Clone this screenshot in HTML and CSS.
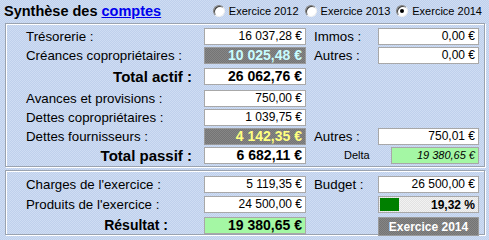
FILE: index.html
```html
<!DOCTYPE html>
<html lang="fr">
<head>
  <meta charset="UTF-8" />
  <title>Synthèse des comptes</title>
  <link rel="stylesheet" href="styles.css">
</head>
<body>
  <div class="header">
    <h1>Synthèse des <a href="#">comptes</a></h1>
    <div class="years">
      <label class="radio"><span class="circle"></span>Exercice 2012</label>
      <label class="radio"><span class="circle"></span>Exercice 2013</label>
      <label class="radio checked"><span class="circle"></span>Exercice 2014</label>
    </div>
  </div>

  <!-- Bilan -->
  <div class="panel bilan">
    <div class="row">
      <span class="label">Trésorerie :</span>
      <span class="val">16 037,28 €</span>
      <span class="label side">Immos :</span>
      <span class="val">0,00 €</span>
    </div>
    <div class="row">
      <span class="label">Créances copropriétaires :</span>
      <span class="val grey cyan">10 025,48 €</span>
      <span class="label side">Autres :</span>
      <span class="val">0,00 €</span>
    </div>
    <div class="row total-actif">
      <span class="label total">Total actif :</span>
      <span class="val bold">26 062,76 €</span>
    </div>
    <div class="row">
      <span class="label">Avances et provisions :</span>
      <span class="val">750,00 €</span>
    </div>
    <div class="row">
      <span class="label">Dettes copropriétaires :</span>
      <span class="val">1 039,75 €</span>
    </div>
    <div class="row">
      <span class="label">Dettes fournisseurs :</span>
      <span class="val grey yellow">4 142,35 €</span>
      <span class="label side">Autres :</span>
      <span class="val">750,01 €</span>
    </div>
    <div class="row">
      <span class="label total">Total passif :</span>
      <span class="val bold">6 682,11 €</span>
      <span class="label delta-label">Delta</span>
      <span class="val green delta">19 380,65 €</span>
    </div>
  </div>

  <!-- Resultat -->
  <div class="panel resultat">
    <div class="row">
      <span class="label">Charges de l'exercice :</span>
      <span class="val">5 119,35 €</span>
      <span class="label side">Budget :</span>
      <span class="val">26 500,00 €</span>
    </div>
    <div class="row">
      <span class="label">Produits de l'exercice :</span>
      <span class="val">24 500,00 €</span>
      <span class="progress"><span class="fill" style="width: 19px"></span><b>19,32 %</b></span>
    </div>
    <div class="row">
      <span class="label total result">Résultat :</span>
      <span class="val bold green">19 380,65 €</span>
      <button class="btn">Exercice 2014</button>
    </div>
  </div>
</body>
</html>
```

FILE: styles.css
```css
* { box-sizing: border-box; }
body {
  margin: 0;
  width: 489px;
  height: 240px;
  font-family: "Liberation Sans", Arial, sans-serif;
  color: #000;
  background: repeating-conic-gradient(#bfd0ec 0 25%, #cfddf3 0 50%) 0 0 / 2px 2px;
  overflow: hidden;
}
.header {
  display: flex;
  align-items: center;
  height: 23px;
  padding-left: 4px;
  padding-bottom: 1px;
}
h1 {
  margin: 0;
  font-size: 14.5px;
  font-weight: bold;
}
h1 a {
  color: #0000ee;
  text-decoration: underline;
}
.years {
  margin-left: auto;
  display: flex;
  gap: 6px;
  padding-right: 7px;
  font-size: 11px;
}
.radio {
  display: flex;
  align-items: center;
  gap: 4px;
}
.circle {
  width: 12px;
  height: 12px;
  border-radius: 50%;
  background: #fff;
  border: 1px solid;
  border-color: #808080 #f0f0f0 #f0f0f0 #808080;
  box-shadow: inset 1px 1px #404040;
  position: relative;
}
.radio.checked .circle::after {
  content: "";
  position: absolute;
  left: 3px;
  top: 3px;
  width: 4px;
  height: 4px;
  border-radius: 50%;
  background: #000;
}
.panel {
  margin: 0 4px 0 5px;
  border: 1px solid #9aa3b0;
  box-shadow: inset 1px 1px #fff, 1px 1px #fff;
  padding: 4px 0 2px 20px;
  display: flex;
  flex-direction: column;
  gap: 2px;
}
.resultat {
  margin-top: 3px;
  padding-top: 5px;
}
.resultat .row:nth-child(2) { margin-top: 1px; }
.row {
  display: grid;
  grid-template-columns: 178px 102px 72px 101px;
  height: 17px;
  align-items: center;
}
.total-actif {
  margin: 2px 0 3px;
}
.label {
  font-size: 13.3px;
  line-height: 17px;
  white-space: nowrap;
}
.label.side {
  padding-left: 8px;
}
.label.total {
  font-weight: bold;
  font-size: 15px;
  text-align: right;
  padding-right: 12px;
}
.label.result {
  font-size: 14px;
  padding-right: 36px;
}
.delta-label {
  font-size: 11px;
  padding-left: 38px;
}
.val {
  height: 17px;
  background: #fff;
  border: 1px solid #a8a8a8;
  font-size: 12px;
  line-height: 15px;
  text-align: right;
  padding-right: 3px;
  white-space: nowrap;
}
.row .val:nth-child(2) { grid-column: 2; }
.val.bold {
  font-weight: bold;
  font-size: 14px;
}
.val.grey {
  background: repeating-conic-gradient(#747474 0 25%, #868686 0 50%) 0 0 / 2px 2px;
  border-color: #9a9a9a;
  font-weight: bold;
  font-size: 14px;
}
.val.cyan { color: #c8fcff; }
.val.yellow { color: #ffff80; }
.val.green {
  background: #a4f7a4;
}
.val.delta {
  margin-left: 13px;
  font-style: italic;
  font-size: 11px;
}
.progress {
  grid-column: 4;
  height: 17px;
  border: 1px solid #a8a8a8;
  padding: 1px;
  background: repeating-conic-gradient(#e2e2e2 0 25%, #f2f2f2 0 50%) 0 0 / 2px 2px;
  display: flex;
  align-items: center;
}
.progress .fill {
  height: 13px;
  background: #008000;
}
.progress b {
  margin-left: auto;
  font-size: 12px;
  padding-right: 2px;
}
.btn {
  grid-column: 4;
  height: 19px;
  margin-top: 2px;
  border: 1px solid #9a9a9a;
  background: repeating-conic-gradient(#747474 0 25%, #868686 0 50%) 0 0 / 2px 2px;
  color: #fff;
  font-family: "Liberation Sans", Arial, sans-serif;
  font-weight: bold;
  font-size: 12px;
  padding: 0;
}
```
